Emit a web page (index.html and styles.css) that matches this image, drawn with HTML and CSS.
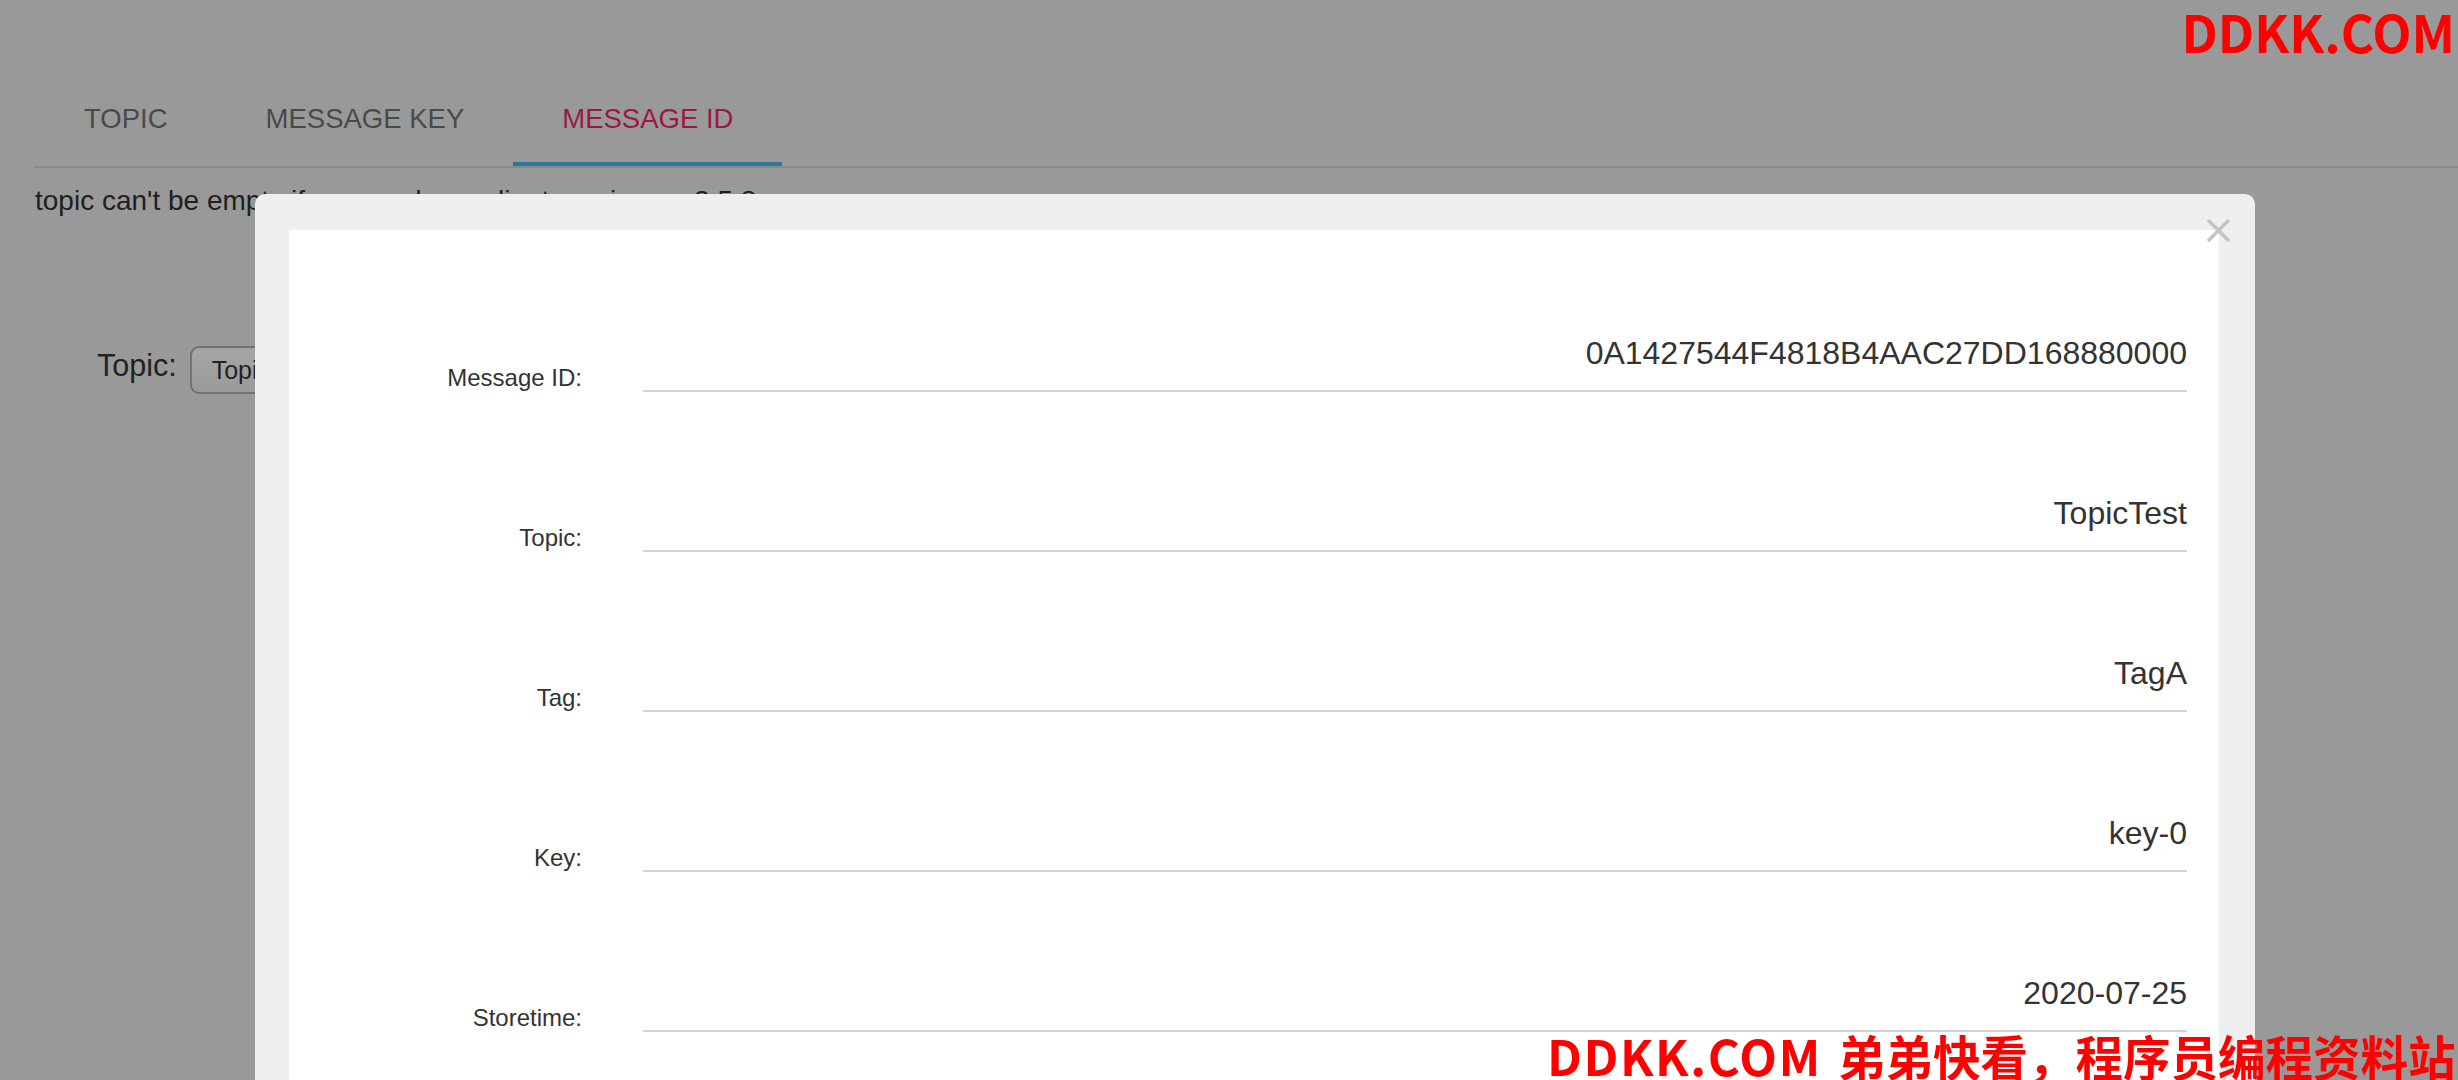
FILE: index.html
```html
<!DOCTYPE html>
<html lang="en">
<head>
<meta charset="utf-8">
<title>Message Query</title>
<link rel="stylesheet" href="styles.css">
</head>
<body>
<div class="page">
  <ul class="tabs">
    <li class="tab">TOPIC</li>
    <li class="tab">MESSAGE KEY</li>
    <li class="tab active">MESSAGE ID</li>
  </ul>
  <p class="hint">topic can't be empty if you producer client version&gt;=v3.5.8</p>
  <div class="query">
    <span class="query-label">Topic:</span>
    <div class="select">TopicTest</div>
  </div>
</div>

<div class="modal">
  <button class="close" aria-label="close">
    <svg width="25" height="25" viewBox="0 0 25 25"><path d="M2 2 L23 23 M23 2 L2 23" stroke="#c4c4c4" stroke-width="3.6" fill="none"/></svg>
  </button>
  <div class="panel">
    <div class="row"><label class="label">Message ID:</label><div class="field">0A1427544F4818B4AAC27DD168880000</div></div>
    <div class="row"><label class="label">Topic:</label><div class="field">TopicTest</div></div>
    <div class="row"><label class="label">Tag:</label><div class="field">TagA</div></div>
    <div class="row"><label class="label">Key:</label><div class="field">key-0</div></div>
    <div class="row"><label class="label">Storetime:</label><div class="field">2020-07-25</div></div>
  </div>
</div>

<div class="wm wm-top">DDKK.COM</div>
<div class="wm wm-bottom"><span class="wm-latin">DDKK.COM</span>弟弟快看，程序员编程资料站</div>
</body>
</html>
```

FILE: styles.css
```css
html, body {
  margin: 0;
  height: 1080px;
  overflow: hidden;
}
body {
  background: #999999;
  font-family: "Liberation Sans", Arial, sans-serif;
  color: #1f1f1f;
}
.page {
  padding: 103px 0 0 35px;
}
.tabs {
  list-style: none;
  margin: 0;
  padding: 0;
  display: flex;
  border-bottom: 2px solid #8a8a8a;
}
.tab {
  font-size: 27.5px;
  line-height: 31px;
  padding: 0 49px 28px;
  color: #4a4a4a;
  border-bottom: 4px solid transparent;
}
.tab.active {
  color: #9b1846;
  border-bottom-color: #2a789c;
}
.hint {
  margin: 17px 0 0;
  font-size: 28px;
  line-height: 32px;
  color: #1f1f1f;
}
.query {
  display: flex;
  align-items: flex-start;
  margin-top: 129px;
  padding-left: 62px;
}
.query-label {
  font-size: 30.5px;
  line-height: 30px;
  margin-top: 4px;
  margin-right: 13px;
  color: #222;
}
.select {
  width: 300px;
  height: 44px;
  border: 2px solid #727272;
  border-radius: 9px;
  background: linear-gradient(#a6a6a6, #9a9a9a);
  font-size: 25px;
  line-height: 44px;
  padding-left: 20px;
  color: #222;
  box-sizing: content-box;
}

.modal {
  position: fixed;
  left: 255px;
  top: 194px;
  width: 2000px;
  height: 1000px;
  box-sizing: border-box;
  background: #efefef;
  border-radius: 10px;
  padding: 36px 36px 0 34px;
}
.close {
  position: absolute;
  left: 1951px;
  top: 24px;
  width: 25px;
  height: 25px;
  padding: 0;
  border: 0;
  background: none;
  display: block;
}
.close svg {
  display: block;
}
.panel {
  background: #ffffff;
  height: 100%;
  padding: 103px 32px 0 0;
  box-sizing: border-box;
  display: flex;
  flex-direction: column;
  gap: 101px;
}
.row {
  display: flex;
  align-items: flex-end;
}
.label {
  width: 293px;
  flex: none;
  text-align: right;
  font-size: 24px;
  line-height: 28px;
  color: #333;
  margin-right: 61px;
  margin-bottom: 0;
}
.field {
  flex: 1;
  text-align: right;
  font-size: 32px;
  line-height: 40px;
  padding-bottom: 17px;
  border-bottom: 2px solid #d3d3d3;
  color: #333;
}

.wm {
  position: fixed;
  color: #ff0000;
  font-family: "Noto Sans CJK SC", "Noto Sans", sans-serif;
  font-weight: 700;
  white-space: nowrap;
}
.wm-top {
  top: 5px;
  right: 3px;
  font-size: 51px;
  line-height: 52px;
}
.wm-bottom {
  top: 1030px;
  left: 1547px;
  font-size: 47.5px;
  line-height: 49px;
}
.wm-latin {
  font-size: 49px;
  letter-spacing: 1.5px;
  margin-right: 16px;
}
```
